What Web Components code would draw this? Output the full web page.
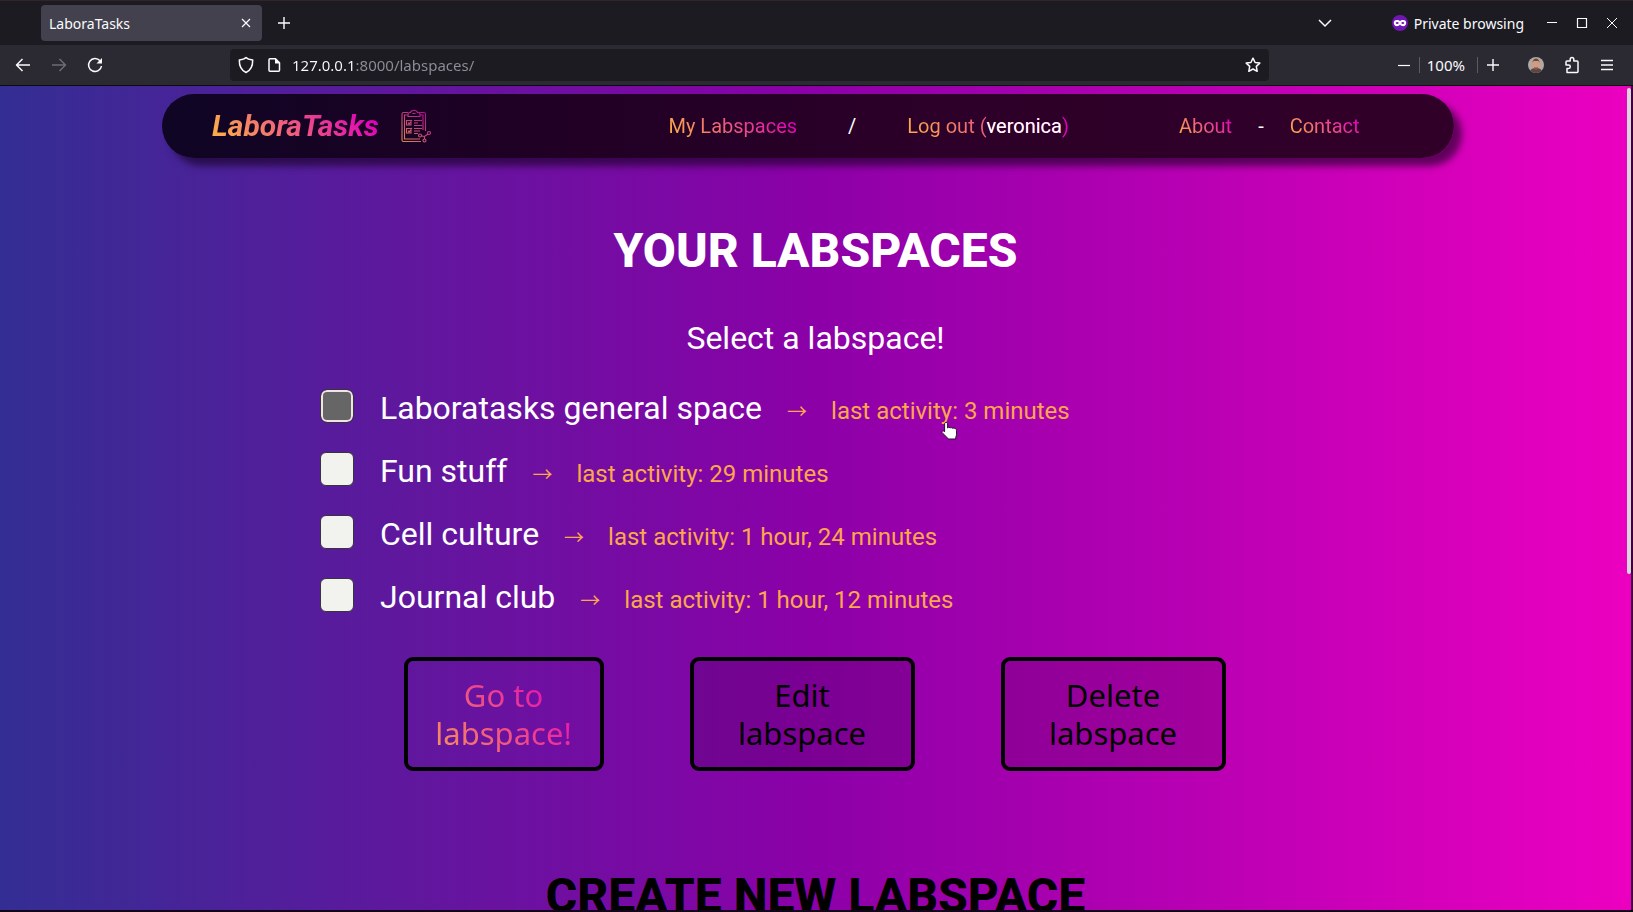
<!DOCTYPE html>
<html lang="en">
<head>
<meta charset="utf-8">
<title>LaboraTasks</title>
<style>
  html, body { margin: 0; height: 100%; background: #1c1b22; }
  body { font-family: Roboto, sans-serif; color: #fff; overflow: hidden; }
</style>
</head>
<body>
<browser-window>
  <tab-strip slot="chrome" label="LaboraTasks"></tab-strip>
  <tool-bar slot="chrome" address="127.0.0.1:8000/labspaces/"></tool-bar>
  <site-nav></site-nav>
  <labspace-picker>
    <labspace-row name="Laboratasks general space" activity="3 minutes" active></labspace-row>
    <labspace-row name="Fun stuff" activity="29 minutes"></labspace-row>
    <labspace-row name="Cell culture" activity="1 hour, 24 minutes"></labspace-row>
    <labspace-row name="Journal club" activity="1 hour, 12 minutes"></labspace-row>
    <action-button slot="actions" primary>Go to<br>labspace!</action-button>
    <action-button slot="actions">Edit<br>labspace</action-button>
    <action-button slot="actions">Delete<br>labspace</action-button>
  </labspace-picker>
  <section-title>Create new labspace</section-title>
</browser-window>

<script>
const define = (name, html, setup) => {
  const template = document.createElement('template');
  template.innerHTML = html;
  customElements.define(name, class extends HTMLElement {
    constructor() {
      super();
      this.attachShadow({ mode: 'open' }).append(template.content.cloneNode(true));
    }
    connectedCallback() { if (setup) setup(this, this.shadowRoot); }
  });
};

define('browser-window', `
<style>
  :host { display: flex; flex-direction: column; height: 100vh; box-sizing: border-box; border-bottom: 2px solid #14051a; background: #1c1b22; }
  main { position: relative; flex: 1; min-height: 0; overflow: hidden; border-right: 2px solid #45003f; background: linear-gradient(to right, #332e93, #8c00a8 50%, #ec00c0); }
  .thumb { position: absolute; right: 0; top: 2px; width: 4px; height: 59%; border-radius: 2px; background: #dcd6dc; }
</style>
<slot name="chrome"></slot>
<main><slot></slot><div class="thumb"></div></main>`);

define('tab-strip', `
<style>
  :host { display: flex; align-items: center; height: 45px; box-sizing: border-box; padding: 0 15px 0 41px; border-top: 1px solid #33242a; background: #1c1b22; font: 14px "Noto Sans", sans-serif; color: #fbfbfe; }
  .tab { display: flex; align-items: center; justify-content: space-between; width: 221px; height: 36px; box-sizing: border-box; padding: 0 8px; border-radius: 4px; background: #42414d; }
  button { display: grid; place-items: center; padding: 0; border: 0; background: none; color: inherit; }
  .plus { margin: 0 auto 0 15px; }
  .private { display: flex; align-items: center; gap: 6px; margin: 0 4px 0 60px; }
  .win { margin-left: 18px; }
  svg { display: block; fill: none; stroke: currentColor; }
</style>
<div class="tab"><span></span>
  <button aria-label="Close tab"><svg width="16" height="16"><path d="M4 4l8 8M12 4l-8 8" stroke-width="1.2"/></svg></button>
</div>
<button class="plus" aria-label="New tab"><svg width="14" height="14"><path d="M7 1v12M1 7h12" stroke-width="1.4"/></svg></button>
<button aria-label="List all tabs"><svg width="14" height="14"><path d="M1 4l6 6 6-6" stroke-width="1.5"/></svg></button>
<div class="private">
  <svg width="16" height="16"><circle cx="8" cy="8" r="8" fill="#6f17b4" stroke="none"/><path d="M8 6.200C7 4.800 1.800 4.200 1.800 7.800 1.800 12 6.500 11.800 8 9.600c1.500 2.200 6.200 2.400 6.200-1.800C14.200 4.200 9 4.800 8 6.200z" fill="#fff" stroke="none"/><ellipse cx="5.200" cy="8" rx="1.500" ry="1.100" fill="#6f17b4" stroke="none"/><ellipse cx="10.800" cy="8" rx="1.500" ry="1.100" fill="#6f17b4" stroke="none"/></svg>
  <span>Private browsing</span>
</div>
<button class="win" aria-label="Minimize"><svg width="12" height="12"><path d="M1 5.500h10"/></svg></button>
<button class="win" aria-label="Maximize"><svg width="12" height="12"><path d="M1.500 1.500h9v9h-9z" stroke-width="1.200"/></svg></button>
<button class="win" aria-label="Close"><svg width="12" height="12"><path d="M1 1l10 10M11 1L1 11"/></svg></button>`,
(el, root) => { root.querySelector('.tab span').textContent = el.getAttribute('label'); });

define('tool-bar', `
<style>
  :host { display: flex; align-items: center; height: 41px; box-sizing: border-box; padding: 0 19px 0 14px; border-bottom: 1px solid #0c0c0d; background: #2b2a33; font: 15px "Noto Sans", sans-serif; color: #fbfbfe; }
  button { display: grid; place-items: center; padding: 0; border: 0; background: none; color: inherit; font: inherit; }
  .history { display: flex; gap: 18px; flex: 0 0 216px; }
  .bar { display: flex; align-items: center; flex: 0 1 1039px; height: 32px; box-sizing: border-box; padding: 0 8px; border-radius: 4px; background: #1c1b22; }
  .bar button + button { margin-left: 12px; }
  input { flex: 1; min-width: 0; margin: 0 0 0 10px; padding: 0; border: 0; outline: 0; font: inherit; line-height: 24px; color: transparent; background: linear-gradient(to right, #fbfbfe 64px, #8f8e98 64px); -webkit-background-clip: text; background-clip: text; }
  .zoom { display: flex; align-items: center; margin-left: auto; height: 16px; }
  .level { margin: 0 9px; padding: 0 12px 0 7px; border: solid #5b5a66; border-width: 0 1px; height: 16px; line-height: 14px; }
  .menu { display: flex; align-items: center; gap: 20px; margin-left: 29px; }
  svg { display: block; fill: none; stroke: currentColor; stroke-width: 1.5; stroke-linejoin: round; }
</style>
<div class="history">
  <button aria-label="Back"><svg width="18" height="18"><path d="M16 9H2.500M8.500 3l-6 6 6 6"/></svg></button>
  <button aria-label="Forward" style="color:#6d6c76"><svg width="18" height="18"><path d="M2 9h13.500M9.500 3l6 6-6 6"/></svg></button>
  <button aria-label="Reload"><svg width="18" height="18"><path d="M14 4.800A6.500 6.500 0 1 0 15.500 10"/><path d="M16 2v5.500h-5.500z" fill="currentColor" stroke="none"/></svg></button>
</div>
<div class="bar">
  <button aria-label="Tracking protection"><svg width="16" height="18"><path d="M8 1.500C9.500 3 12.500 3.700 14.700 4 14.800 10 12.500 14.500 8 16.500 3.500 14.500 1.200 10 1.300 4 3.500 3.700 6.500 3 8 1.500z"/></svg></button>
  <button aria-label="Site information"><svg width="16" height="16"><path d="M4 1.700h5.500l4 4v7.600a1 1 0 0 1-1 1H4a1 1 0 0 1-1-1V2.700a1 1 0 0 1 1-1z"/><path d="M9 1v5.500h5z" fill="currentColor" stroke="none"/></svg></button>
  <input type="text" aria-label="Address" spellcheck="false">
  <button aria-label="Bookmark"><svg width="16" height="16"><path d="M8 1.200l2.100 4.300 4.700.6-3.500 3.300.9 4.900L8 12l-4.200 2.300.9-4.900L1.200 6.100l4.700-.6z"/></svg></button>
</div>
<div class="zoom">
  <button aria-label="Zoom out"><svg width="12" height="12"><path d="M0 6.500h12" stroke-width="1.200"/></svg></button>
  <button class="level" aria-label="Zoom level">100%</button>
  <button aria-label="Zoom in"><svg width="12" height="12"><path d="M0 6h12M6 0v12" stroke-width="1.400"/></svg></button>
</div>
<div class="menu">
  <button aria-label="Account"><svg width="16" height="16" style="stroke:none;border-radius:8px"><rect width="16" height="16" fill="#b3a79f"/><path d="M1 16c1-4 4-5 7-5s6 1 7 5z" fill="#5c4640"/><ellipse cx="8" cy="7.500" rx="3.500" ry="5" fill="#d39a86"/><path d="M4.500 6C4.500 0 11.500 0 11.500 6L10.500 4h-5z" fill="#6b4a3c"/><path d="M6 10c1 1 3 1 4 0l-.5 2.500h-3z" fill="#7c4a3c"/></svg></button>
  <button aria-label="Extensions"><svg width="16" height="18"><path d="M3 16.500v-4h1.600a1.700 1.700 0 0 0 0-3.400H2V6a1 1 0 0 1 1-1h3.200V3.300a1.800 1.800 0 0 1 3.600 0V5H13a1 1 0 0 1 1 1v9.500a1 1 0 0 1-1 1z"/></svg></button>
  <button aria-label="Menu"><svg width="14" height="12"><path d="M1 1.500h12M1 6h12M1 10.500h12" stroke-width="1.300"/></svg></button>
</div>`,
(el, root) => { root.querySelector('input').value = el.getAttribute('address'); });

define('site-nav', `
<style>
  :host { display: block; padding: 8px 11% 0 10%; margin: 0 -2px 0 -1px; }
  nav { display: flex; align-items: center; height: 64px; padding: 0 94px 0 50px; border-radius: 32px; background: linear-gradient(to right, #0f0524, #200024 30%, #2c0028 60%, #310029); box-shadow: 8px 8px 7px rgba(20, 0, 30, .6); font-size: 20px; line-height: 28px; white-space: nowrap; }
  a { color: transparent; background: linear-gradient(45deg, #fba94c 10%, #e000bb 90%); -webkit-background-clip: text; background-clip: text; text-decoration: none; }
  b { font-weight: 400; color: #fff; }
  .brand { padding-right: 2px; font: italic 700 30px/36px Roboto, sans-serif; }
  svg { margin-left: 20px; }
  .group { display: flex; }
  .user { gap: 51px; margin-left: auto; }
  .info { gap: 26px; margin-left: 110px; }
</style>
<nav aria-label="Main">
  <a class="brand" href="#">LaboraTasks</a>
  <svg width="30" height="34" viewBox="0 0 30 34" fill="none" stroke="url(#ink)" stroke-width="1.100" aria-hidden="true">
    <defs><linearGradient id="ink" gradientUnits="userSpaceOnUse" x1="0" y1="34" x2="26" y2="2"><stop stop-color="#e0904f"/><stop offset=".5" stop-color="#c04e74"/><stop offset="1" stop-color="#b00095"/></linearGradient></defs>
    <path d="M7 3.500H2.500A1.500 1.500 0 0 0 1 5v26a1.500 1.500 0 0 0 1.500 1.500H20M18 3.500h5A1.500 1.500 0 0 1 24.500 5v17"/>
    <path d="M6.500 6H3.500v24H19M19 6h3v15"/>
    <path d="M7 7.500V5.500a2 2 0 0 1 2-2h.5c.8-3 6.200-3 7 0h.5a2 2 0 0 1 2 2v2zM11.500 4.500h3"/>
    <path d="M5.500 11.500h4.500v4.500H5.500zM7 13.500l1 1.500 3-4M5.500 19.500h4.500V24H5.500zM7 21.500l1 1.500 3-4M13 11.500h8M13 14h4M13 16.500h8M13 19.500h8M13 22h6M13 24.500h4"/>
    <circle cx="19" cy="26.500" r="1.500"/><circle cx="28" cy="24" r="1.500"/><circle cx="23.500" cy="31.500" r="1.500"/><path d="M20.500 27l3 .5 3.500-2.500M23.500 28v2"/>
  </svg>
  <div class="group user"><a href="#">My Labspaces</a><b>/</b><a href="#">Log out (<b>veronica</b>)</a></div>
  <div class="group info"><a href="#">About</a><b>-</b><a href="#">Contact</a></div>
</nav>`);

define('labspace-picker', `
<style>
  :host { display: block; padding-top: 65px; text-align: center; }
  h1 { margin: 0; font-size: 48px; line-height: 56px; font-weight: 800; }
  p { margin: 40px 0 30px; font-size: 32px; line-height: 38px; }
  .list { padding-left: 320px; text-align: left; }
  .actions { display: flex; justify-content: center; gap: 86px; margin: 18px 2px 0 0; }
</style>
<h1>YOUR LABSPACES</h1>
<p>Select a labspace!</p>
<div class="list"><slot></slot></div>
<div class="actions"><slot name="actions"></slot></div>`);

define('labspace-row', `
<style>
  :host { display: block; height: 63px; }
  .row { display: flex; align-items: flex-start; }
  input { appearance: none; flex: none; width: 34px; height: 34px; margin: 2px 26px 0 0; box-sizing: border-box; border: 1px solid #38333c; border-radius: 6px; background: #f2f2ee; }
  :host([active]) input { border: 2px solid #f0e4e4; outline: 1px solid #38333c; width: 32px; height: 32px; margin: 3px 27px 0 1px; background: #666; }
  label { padding-top: 2px; font-size: 32px; line-height: 38px; color: #fff; white-space: nowrap; }
  small { position: relative; margin-left: 25px; font-size: 24px; color: #fba74c; }
  i { margin-right: 24px; font: 20px/20px "Noto Sans CJK JP", sans-serif; }
  em { font-style: normal; }
  svg { display: none; position: absolute; left: 154px; top: 24px; }
  :host([active]) svg { display: block; }
</style>
<div class="row">
  <input type="checkbox" id="pick">
  <label for="pick"><span></span><small><i>→</i><em></em><svg width="18" height="20"><path d="M5 1.500c1.200 0 1.600.7 1.600 1.500v4l1-.8 1.700.6.900-.3 1.500.8 1-.2c1.700.2 2.800.8 2.800 2.400v4.200L14.500 18H7.500L1 11.500c-.4-1.300 1-2 2-1.400l.600.7V3c0-.9.400-1.500 1.400-1.500z" fill="#fff" stroke="#26102c"/></svg></small></label>
</div>`,
(el, root) => {
  root.querySelector('span').textContent = el.getAttribute('name');
  root.querySelector('em').textContent = 'last activity: ' + el.getAttribute('activity');
});

define('action-button', `
<style>
  :host { display: block; }
  button { display: block; width: 225px; height: 114px; box-sizing: border-box; padding: 0; border: 4px solid #000; border-radius: 9px; background: rgba(0, 0, 0, .12); color: #000; font: 31px/38px "Noto Sans", sans-serif; }
  :host([primary]) button { width: 200px; background: none; }
  :host([primary]) span { display: block; color: transparent; background: linear-gradient(45deg, #fba94c, #e400bb 85%); -webkit-background-clip: text; background-clip: text; }
</style>
<button type="button"><span><slot></slot></span></button>`);

define('section-title', `
<style>
  :host { display: block; margin-top: 97px; text-align: center; }
  h2 { margin: 0; font-size: 48px; line-height: 56px; font-weight: 800; color: #000; text-transform: uppercase; }
</style>
<h2><slot></slot></h2>`);
</script>
</body>
</html>
